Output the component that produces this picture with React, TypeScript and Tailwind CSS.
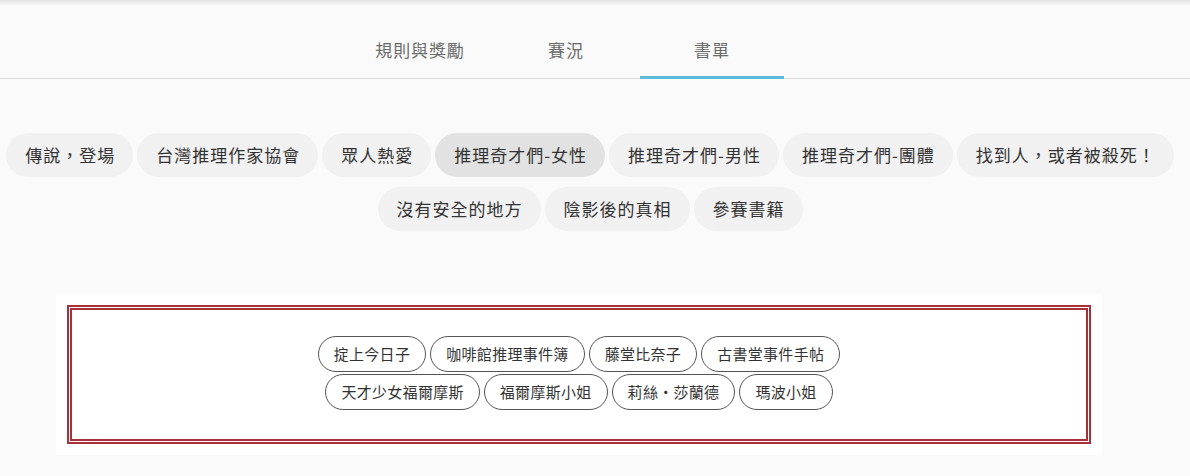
import React, { ReactElement } from "react";

const TABS = ["規則與獎勵", "賽況", "書單"];

const CATEGORIES = [
  "傳說，登場",
  "台灣推理作家協會",
  "眾人熱愛",
  "推理奇才們-女性",
  "推理奇才們-男性",
  "推理奇才們-團體",
  "找到人，或者被殺死！",
  "沒有安全的地方",
  "陰影後的真相",
  "參賽書籍",
];

const BOOKS = [
  ["掟上今日子", "咖啡館推理事件簿", "藤堂比奈子", "古書堂事件手帖"],
  ["天才少女福爾摩斯", "福爾摩斯小姐", "莉絲‧莎蘭德", "瑪波小姐"],
];

function Tabs(): ReactElement {
  return (
    <div className="flex h-[79px] items-end border-b border-[#dcdcdc] pl-[347px]">
      {TABS.map((tab, i) => (
        <div
          key={tab}
          className="relative flex h-full w-[146px] items-end justify-center pb-[16px]"
        >
          <span className="text-[17px] leading-[24px] tracking-[0.9px] text-[#6b6b6b]">
            {tab}
          </span>
          {i === 2 ? (
            <div className="absolute bottom-[-1px] left-[1px] right-[1px] h-[3px] bg-[#5bbcdb]" />
          ) : null}
        </div>
      ))}
    </div>
  );
}

function App(): ReactElement {
  return (
    <div
      className="h-[476px] w-[1190px] overflow-hidden bg-[#fafafa]"
      style={{ fontFamily: '"Noto Sans CJK TC", "Liberation Sans", sans-serif' }}
    >
      <div className="h-[6px] bg-gradient-to-b from-[#e2e2e2] to-[#fafafa]" />
      <div className="-mt-[6px]">
        <Tabs />
      </div>

      <div className="mt-[54px] flex w-[1180px] flex-wrap justify-center gap-x-[4px] gap-y-[10px]">
        {CATEGORIES.map((c) => (
          <div
            key={c}
            className={
              "rounded-full py-[10px] pl-[19px] pr-[18px] text-[17px] leading-[24px] tracking-[1px] text-[#333] " +
              (c === "推理奇才們-女性" ? "bg-[#e2e2e2]" : "bg-[#f1f1f1]")
            }
          >
            {c}
          </div>
        ))}
      </div>

      <div className="ml-[56px] mt-[63px] w-[1046px] bg-white p-[11px]">
        <div className="flex h-[139px] flex-col items-center gap-[2px] border-[5px] border-double border-[#a8303a] pt-[26px]">
          {BOOKS.map((row, r) => (
            <div key={r} className="flex gap-[4px]">
              {row.map((b) => (
                <div
                  key={b}
                  className="rounded-full border border-[#555] px-[15px] py-[6px] text-[15px] leading-[22px] tracking-[0.3px] text-[#333]"
                >
                  {b}
                </div>
              ))}
            </div>
          ))}
        </div>
      </div>
    </div>
  );
}

export default App;
